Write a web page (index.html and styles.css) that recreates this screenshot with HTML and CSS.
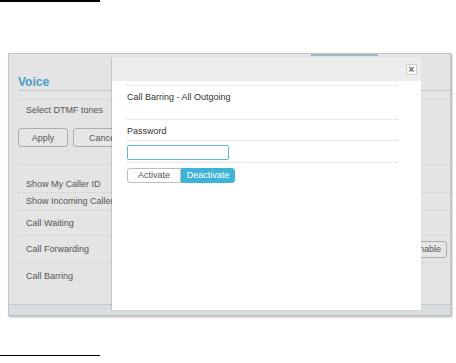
FILE: index.html
```html
<!DOCTYPE html>
<html>
<head>
<meta charset="utf-8">
<link rel="stylesheet" href="styles.css">
</head>
<body>
<div class="rule rule-top"></div>
<div class="panel">
  <div class="tab-mark"></div>
  <div class="voice-head"><span class="voice-title">Voice</span></div>
  <div class="gap"></div>
  <div class="dtmf">
    <div class="label">Select DTMF tones</div>
    <div class="btns">
      <button class="btn">Apply</button>
      <button class="btn btn-wide">Cancel</button>
    </div>
  </div>
  <div class="row r1"><span class="label">Show My Caller ID</span></div>
  <div class="row r2"><span class="label">Show Incoming Caller ID</span></div>
  <div class="row r3"><span class="label">Call Waiting</span></div>
  <div class="row r4"><span class="label">Call Forwarding</span><button class="btn btn-right">Enable</button></div>
  <div class="row r5 last"><span class="label">Call Barring</span></div>
  <div class="fill"></div>
  <div class="foot"></div>

  <div class="modal">
    <div class="modal-head"><span class="close">×</span></div>
    <div class="modal-body">
      <div class="m-line"></div>
      <div class="m-title">Call Barring - All Outgoing</div>
      <div class="m-line"></div>
      <div class="m-label">Password</div>
      <div class="m-line"></div>
      <div class="m-input"><input type="text" class="pw"></div>
      <div class="m-line"></div>
      <div class="seg">
        <span class="seg-btn">Activate</span>
        <span class="seg-btn on">Deactivate</span>
      </div>
    </div>
  </div>
</div>
<div class="rule rule-bottom"></div>
</body>
</html>
```
FILE: styles.css
```css
html, body {
  margin: 0;
  padding: 0;
  background: #fff;
  font-family: "Liberation Sans", Arial, sans-serif;
  font-size: 9px;
  color: #555;
}
.rule {
  width: 100px;
  background: #000;
}
.rule-top { height: 2px; }
.rule-bottom { height: 1px; margin-top: 39px; }

.panel {
  position: relative;
  margin: 51px 0 0 8px;
  width: 441px;
  height: 261px;
  border: 1px solid #c4c4c4;
  background: #e4e4e4;
  box-shadow: 1px 1px 2px rgba(0,0,0,0.35);
  display: flex;
  flex-direction: column;
  overflow: hidden;
}
.tab-mark {
  position: absolute;
  left: 302px;
  top: 0;
  width: 67px;
  height: 2px;
  background: #9db9c6;
}
.voice-head {
  height: 37px;
  margin-left: 9px;
  border-bottom: 1px solid #c8c8c8;
  display: flex;
  align-items: flex-end;
  padding-bottom: 1px;
  box-sizing: border-box;
}
.voice-title {
  font-size: 12px;
  line-height: 14px;
  font-weight: bold;
  color: #4a9dc8;
}
.gap {
  height: 9px;
  margin-left: 9px;
  border-bottom: 1px dotted #cfcfcf;
  box-sizing: border-box;
}
.label { line-height: 11px; }
.dtmf {
  margin-left: 9px;
  height: 65px;
  border-bottom: 1px dotted #cfcfcf;
  box-sizing: border-box;
  padding: 5px 0 0 8px;
}
.btns {
  display: flex;
  gap: 5px;
  margin: 12px 0 0 -8px;
}
.btn {
  font-family: "Liberation Sans", Arial, sans-serif;
  font-size: 9px;
  color: #555;
  background: #e6e6e6;
  border: 1px solid #adadad;
  border-radius: 3px;
  width: 50px;
  height: 19px;
  padding: 0;
}
.btn-wide { width: 60px; }
.row {
  margin-left: 9px;
  border-bottom: 1px dotted #cfcfcf;
  display: flex;
  align-items: center;
  padding-left: 8px;
  box-sizing: border-box;
  justify-content: space-between;
}
.r1 { height: 28px; padding-top: 12px; }
.r2 { height: 18px; }
.r3 { height: 25px; }
.r4 { height: 27px; }
.r5 { height: 27px; border-bottom: none; }
.btn-right {
  width: 40px;
  height: 17px;
  margin-right: 3px;
}
.fill { flex: 1; }
.foot {
  height: 10px;
  background: #d8dde0;
  border-top: 1px solid #c3c8cc;
}

.modal {
  position: absolute;
  left: 103px;
  top: 3px;
  width: 309px;
  height: 253px;
  background: #fff;
  box-shadow: -1px 0 1px rgba(0,0,0,0.12);
  display: flex;
  flex-direction: column;
}
.modal-head {
  height: 24px;
  background: #ececec;
  display: flex;
  justify-content: flex-end;
  align-items: center;
  padding-right: 4px;
}
.close {
  width: 9px;
  height: 9px;
  border: 1px solid #cfcfcf;
  background: #fafafa;
  font-size: 10px;
  font-weight: bold;
  line-height: 9px;
  text-align: center;
  color: #666;
}
.modal-body {
  padding: 4px 23px 0 15px;
}
.m-line { border-bottom: 1px dotted #d6d6d6; }
.m-title { height: 33px; line-height: 22px; color: #333; }
.m-label { height: 20px; line-height: 22px; color: #333; }
.m-input { height: 21px; padding-top: 4px; box-sizing: border-box; }
.pw {
  display: block;
  width: 102px;
  height: 15px;
  box-sizing: border-box;
  border: 1px solid #6ab4d2;
  border-radius: 2px;
  padding: 0;
  margin: 0;
  background: #fff;
}
.seg {
  display: flex;
  margin-top: 5px;
}
.seg-btn {
  width: 54px;
  height: 15px;
  box-sizing: border-box;
  border: 1px solid #bdbdbd;
  border-radius: 3px 0 0 3px;
  text-align: center;
  line-height: 13px;
  color: #555;
  background: #fff;
}
.seg-btn.on {
  background: #3fb3d7;
  border-color: #3fb3d7;
  color: #fff;
  border-radius: 0 3px 3px 0;
}
```
